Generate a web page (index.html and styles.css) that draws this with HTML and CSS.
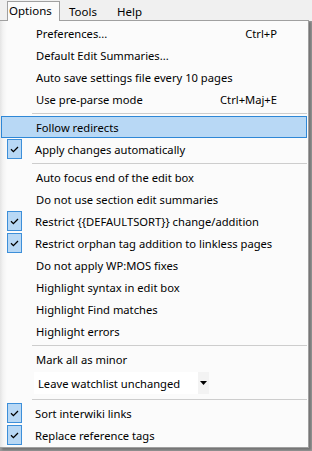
FILE: index.html
```html
<!DOCTYPE html>
<html>
<head>
<meta charset="utf-8">
<link rel="stylesheet" href="styles.css">
</head>
<body>
<div class="menubar">
  <span class="mb-item active">Options</span>
  <span class="mb-item">Tools</span>
  <span class="mb-item">Help</span>
</div>
<div class="menu">
  <div class="item"><span class="icon"></span><span class="label">Preferences...</span><span class="key">Ctrl+P</span></div>
  <div class="item"><span class="icon"></span><span class="label">Default Edit Summaries...</span></div>
  <div class="item"><span class="icon"></span><span class="label">Auto save settings file every 10 pages</span></div>
  <div class="item"><span class="icon"></span><span class="label">Use pre-parse mode</span><span class="key">Ctrl+Maj+E</span></div>
  <div class="sep"></div>
  <div class="item hover"><span class="icon"></span><span class="label">Follow redirects</span></div>
  <div class="item"><span class="icon check"><svg width="9" height="7" viewBox="0 0 9 7"><path d="M1 3.2 L3.4 5.6 L8 1" fill="none" stroke="#000" stroke-width="1.3"/></svg></span><span class="label">Apply changes automatically</span></div>
  <div class="sep"></div>
  <div class="item"><span class="icon"></span><span class="label">Auto focus end of the edit box</span></div>
  <div class="item"><span class="icon"></span><span class="label">Do not use section edit summaries</span></div>
  <div class="item"><span class="icon check"><svg width="9" height="7" viewBox="0 0 9 7"><path d="M1 3.2 L3.4 5.6 L8 1" fill="none" stroke="#000" stroke-width="1.3"/></svg></span><span class="label">Restrict {{DEFAULTSORT}} change/addition</span></div>
  <div class="item"><span class="icon check"><svg width="9" height="7" viewBox="0 0 9 7"><path d="M1 3.2 L3.4 5.6 L8 1" fill="none" stroke="#000" stroke-width="1.3"/></svg></span><span class="label">Restrict orphan tag addition to linkless pages</span></div>
  <div class="item"><span class="icon"></span><span class="label">Do not apply WP:MOS fixes</span></div>
  <div class="item"><span class="icon"></span><span class="label">Highlight syntax in edit box</span></div>
  <div class="item"><span class="icon"></span><span class="label">Highlight Find matches</span></div>
  <div class="item"><span class="icon"></span><span class="label">Highlight errors</span></div>
  <div class="sep"></div>
  <div class="item"><span class="icon"></span><span class="label">Mark all as minor</span></div>
  <div class="combo-row">
    <div class="combo"><span class="combo-text">Leave watchlist unchanged</span><span class="combo-btn"><svg width="7" height="4" viewBox="0 0 7 4"><path d="M0 0 H7 L3.5 4 Z" fill="#000"/></svg></span></div>
  </div>
  <div class="sep"></div>
  <div class="item"><span class="icon check"><svg width="9" height="7" viewBox="0 0 9 7"><path d="M1 3.2 L3.4 5.6 L8 1" fill="none" stroke="#000" stroke-width="1.3"/></svg></span><span class="label">Sort interwiki links</span></div>
  <div class="item"><span class="icon check"><svg width="9" height="7" viewBox="0 0 9 7"><path d="M1 3.2 L3.4 5.6 L8 1" fill="none" stroke="#000" stroke-width="1.3"/></svg></span><span class="label">Replace reference tags</span></div>
</div>
</body>
</html>
```
FILE: styles.css
```css
* { box-sizing: border-box; }
html, body {
  margin: 0;
  padding: 0;
}
body {
  width: 312px;
  height: 451px;
  overflow: hidden;
  background: #9a9a9a;
  font-family: "Noto Sans", "Open Sans", sans-serif;
  font-size: 11.2px;
  color: #000;
}
.menubar {
  height: 21px;
  background: #f0f0f0;
  display: flex;
  align-items: stretch;
  padding-left: 7px;
  padding-top: 1px;
  font-size: 11.5px;
}
.mb-item {
  display: flex;
  align-items: center;
  padding: 0 0 0 8px;
  border: 1px solid transparent;
  border-bottom: none;
  line-height: 1;
}
.mb-item.active {
  width: 53px;
  padding-left: 1px;
  padding-bottom: 1px;
  background: #fbfbfb;
  border-color: #a0a0a0;
  position: relative;
  z-index: 2;
}
.mb-item:nth-child(2) { width: 48px; }
.menu {
  width: 309px;
  height: 428px;
  margin-top: -1px;
  background: linear-gradient(to right, #e4e4e4 0, #f3f3f3 3px, #fbfbfb 7px);
  border: 1px solid #a0a0a0;
  border-left: none;
  padding: 1px;
  box-shadow: 2px 2px 2px rgba(0,0,0,0.25);
}
.item {
  height: 22px;
  display: flex;
  align-items: center;
  border: 1px solid transparent;
}
.item.hover {
  background: #b8d8f5;
  border-color: #2e87d6;
}
.icon {
  width: 32px;
  flex: none;
  height: 20px;
  display: flex;
  align-items: center;
  justify-content: center;
}
.icon.check {
  width: 15px;
  margin: 0 11px 0 5px;
  height: 20px;
  background: #b8d8f5;
  border: 1px solid #3d8fd9;
}
.icon.check svg { display: block; }
.label {
  flex: 1;
  padding-left: 2px;
  white-space: nowrap;
}
.key {
  padding-right: 29px;
  white-space: nowrap;
}
.sep {
  height: 6px;
  display: flex;
  align-items: center;
  padding-left: 31px;
}
.sep::before {
  content: "";
  display: block;
  height: 1px;
  flex: 1;
  background: #cdcdcd;
}
.combo-row {
  height: 26px;
  display: flex;
  align-items: center;
  padding-left: 33px;
}
.combo {
  width: 175px;
  height: 22px;
  background: #fff;
  display: flex;
  align-items: center;
}
.combo-text {
  flex: 1;
  padding-left: 4px;
  white-space: nowrap;
}
.combo-btn {
  width: 11px;
  height: 22px;
  background: #f3f3f3;
  display: flex;
  align-items: center;
  justify-content: center;
}
.combo-btn svg { display: block; }
```
